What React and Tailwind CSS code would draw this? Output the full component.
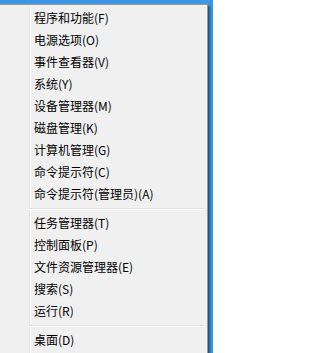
import React from "react";

const groups = [
  [
    "程序和功能(F)",
    "电源选项(O)",
    "事件查看器(V)",
    "系统(Y)",
    "设备管理器(M)",
    "磁盘管理(K)",
    "计算机管理(G)",
    "命令提示符(C)",
    "命令提示符(管理员)(A)",
  ],
  ["任务管理器(T)", "控制面板(P)", "文件资源管理器(E)", "搜索(S)", "运行(R)"],
  ["桌面(D)"],
];

export default function App() {
  return (
    <div
      className="w-[213px] h-[353px] overflow-hidden bg-[#3d97e6] pt-[4px]"
      style={{ fontFamily: '"Noto Sans CJK SC", "Noto Sans", sans-serif' }}
    >
      <div className="ml-[-1px] w-[209px] h-[400px] bg-[#f0f0f0] border border-[#979797] p-[2px] shadow-[2px_2px_2px_rgba(0,0,0,0.45)] flex">
        <div className="w-[27px] shrink-0" />
        <div className="flex-1 border-l border-[#e2e3e3]">
          <div className="border-l border-white h-full">
            {groups.map((g, gi) => (
              <div key={gi}>
                {gi > 0 && (
                  <div className="h-[7px] pt-[3px]">
                    <div className="ml-[-2px] border-t border-[#e2e3e3] border-b border-b-white h-[2px]" />
                  </div>
                )}
                {g.map((t) => (
                  <div
                    key={t}
                    className="h-[22px] flex items-center pl-[3px] text-[12px] leading-none text-black whitespace-nowrap"
                  >
                    {t}
                  </div>
                ))}
              </div>
            ))}
          </div>
        </div>
      </div>
    </div>
  );
}
